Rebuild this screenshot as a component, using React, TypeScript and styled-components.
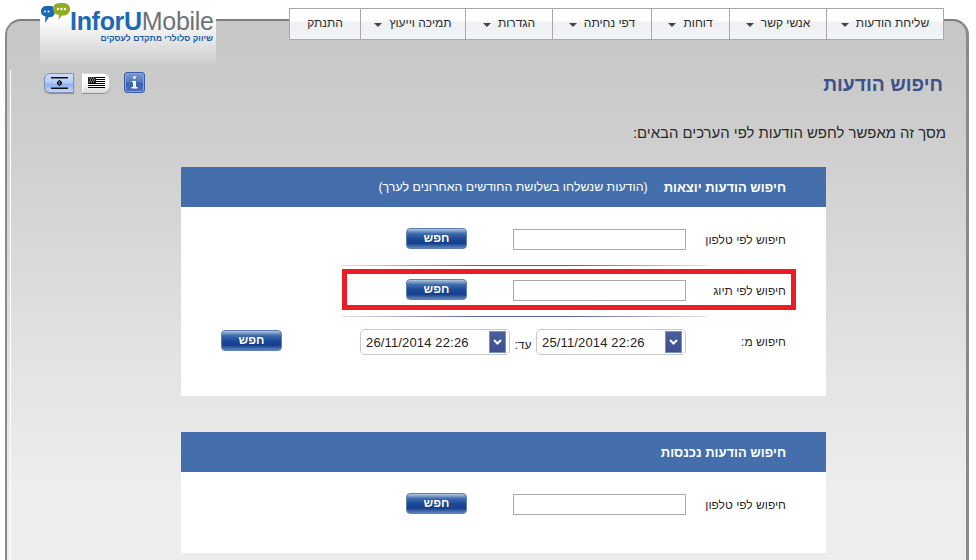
import React from "react";
import styled, { createGlobalStyle } from "styled-components";

const Global = createGlobalStyle`
  html, body { margin: 0; padding: 0; background: #fff; height: 560px; overflow: hidden; }
  body { font-family: "Liberation Sans", Arial, sans-serif; }
  * { box-sizing: border-box; }
`;

const Page = styled.div`
  position: relative;
  width: 976px;
  height: 560px;
  padding: 19px 7px 0 5px;
  overflow: hidden;
`;

const Panel = styled.main`
  height: 600px;
  border-radius: 16px 16px 0 0;
  border-top: 2px solid #7d7d7d;
  border-left: 2px solid #8a8a8a;
  border-right: 3px solid #8a8a8a;
  background: linear-gradient(#c6c6c6 0, #cfcfcf 130px, #e2e2e2 330px, #ededed 470px);
  padding: 49px 23px 0 3px;
`;

const Inner = styled.div`
  border-left: 1px solid #fff;
  height: 100%;
  display: flex;
  flex-direction: column;
  align-items: stretch;
`;

const Logo = styled.div`
  position: absolute;
  left: 40px;
  top: 0;
  width: 176px;
  height: 70px;
  background: linear-gradient(#fff 0, #fff 18px, #c8c8c8 68px);
`;

const LogoIcon = styled.svg`
  position: absolute;
  left: 1px;
  top: 2px;
`;

const LogoText = styled.div`
  position: absolute;
  left: 30px;
  top: 10px;
  font-size: 25px;
  line-height: 23px;
  letter-spacing: -0.3px;
  white-space: nowrap;
  color: #6d7278;
`;

const LogoStrong = styled.span`
  color: #1b69b3;
  font-weight: 700;
`;

const Tagline = styled.div`
  position: absolute;
  right: 3px;
  top: 33px;
  direction: rtl;
  font-size: 8.6px;
  line-height: 10px;
  font-weight: 700;
  color: #1c5ea6;
  white-space: nowrap;
`;

const Menu = styled.nav`
  position: absolute;
  left: 289px;
  top: 8px;
  height: 32px;
  width: 655px;
  display: flex;
  direction: rtl;
  border: 1px solid #a8a8a8;
  background: linear-gradient(#fff 0, #fff 12px, #eff1f4 13px, #f2f3f6 100%);
`;

const MenuItem = styled.div<{ $w: number }>`
  width: ${(p) => p.$w}px;
  flex: none;
  display: flex;
  align-items: center;
  justify-content: center;
  gap: 7px;
  font-size: 12px;
  color: #2d2d2d;
  white-space: nowrap;
  padding-bottom: 2px;
  & + & { border-right: 1px solid #a8a8a8; }
`;

const Caret = styled.span`
  width: 0;
  height: 0;
  margin-top: 3px;
  border-left: 4px solid transparent;
  border-right: 4px solid transparent;
  border-top: 4px solid #444;
`;

const Toolbar = styled.div`
  display: flex;
  justify-content: space-between;
  align-items: flex-start;
  padding: 2px 0 0 33px;
  height: 53px;
`;

const Tools = styled.div`
  display: flex;
  align-items: center;
`;

const FlagButton = styled.div<{ $active?: boolean }>`
  width: ${(p) => (p.$active ? 30 : 28)}px;
  height: 20px;
  margin-right: ${(p) => (p.$active ? 8 : 14)}px;
  display: flex;
  align-items: center;
  justify-content: center;
  border-radius: ${(p) => (p.$active ? "6px 0 0 6px" : "0 7px 7px 0")};
  border: 1px solid ${(p) => (p.$active ? "#7f8fb5" : "#d8d8d8")};
  border-left-color: ${(p) => (p.$active ? "#7f8fb5" : "#fff")};
  box-shadow: 0 1px 1px #8d8d8d;
  background: ${(p) =>
    p.$active
      ? "linear-gradient(#cfdcf8 0, #b9cdf6 45%, #8fb0f2 60%, #c9d8f8 100%)"
      : "linear-gradient(#fff 0, #f6f6f6 60%, #dcdcdc 100%)"};
`;

const InfoButton = styled.div`
  width: 21px;
  height: 21px;
  border-radius: 3px;
  border: 1px solid #3a5ba3;
  box-shadow: inset 0 0 0 1px #8aa4d8;
  background: linear-gradient(#7b9ad4 0, #567abd 45%, #3a5fae 55%, #5074b8 100%);
  display: flex;
  align-items: center;
  justify-content: center;
`;

const Title = styled.h1`
  margin: 0;
  padding-top: 2px;
  direction: rtl;
  font-size: 19.3px;
  line-height: 22px;
  font-weight: 700;
  color: #3e5089;
`;

const Intro = styled.p`
  margin: 0 -3px 0 0;
  direction: rtl;
  font-size: 14.9px;
  line-height: 20px;
  height: 44px;
  color: #2a2a2a;
`;

const Card = styled.section<{ $gap: number }>`
  width: 645px;
  margin-left: 170px;
  margin-bottom: ${(p) => p.$gap}px;
  background: #fff;
  direction: rtl;
`;

const CardHeader = styled.header`
  height: 40px;
  background: #446fac;
  color: #fff;
  display: flex;
  align-items: center;
  padding: 0 40px;
  gap: 16px;
  font-size: 12.4px;
`;

const CardTitle = styled.strong`
  font-size: 13px;
  font-weight: 700;
`;

const CardBody = styled.div<{ $pb: number }>`
  padding: 8px 0 ${(p) => p.$pb}px;
`;

const Row = styled.div`
  position: relative;
  height: 50px;
  display: flex;
  align-items: center;
  padding: 0 40px 1px 0;
  font-size: 12px;
  color: #2a2a2a;
`;

const Label = styled.span`
  width: 100px;
  flex: none;
  white-space: nowrap;
`;

const TextInput = styled.div`
  width: 173px;
  height: 21px;
  flex: none;
  border: 1px solid #a9a9a9;
  background: #fff;
`;

const SearchButton = styled.button<{ $offset: number }>`
  width: 61px;
  height: 21px;
  flex: none;
  margin-right: ${(p) => p.$offset}px;
  margin-top: -2px;
  padding: 0 0 1px;
  border: 1px solid #5e7fb4;
  border-radius: 4px;
  color: #fff;
  font: 700 12px "Liberation Sans", Arial, sans-serif;
  background: linear-gradient(#b4c6df 0, #7a99c6 12%, #3f6cb0 24%, #1f4a98 50%, #143f8c 75%, #5f84bb 100%);
  text-shadow: 0 0 1px #0b2a66;
`;

const Divider = styled.div`
  width: 366px;
  height: 1px;
  margin-right: 119px;
  background: linear-gradient(90deg, #e4e4e8 0, #5560a6 38%, #5560a6 62%, #e4e4e8 100%);
`;

const Highlight = styled.div`
  position: absolute;
  right: 30px;
  top: 3px;
  width: 454px;
  height: 41px;
  border: 5px solid #ed1c24;
  pointer-events: none;
`;

const DateField = styled.div`
  width: 150px;
  height: 26px;
  flex: none;
  margin-top: 1px;
  direction: ltr;
  display: flex;
  align-items: center;
  justify-content: space-between;
  padding: 0 3px 0 5px;
  border: 1px solid #c8c8c8;
  border-radius: 5px;
  font-size: 13px;
  letter-spacing: 0.15px;
  color: #222;
  background: #fff;
`;

const DateArrow = styled.span`
  width: 17px;
  height: 22px;
  display: flex;
  align-items: center;
  justify-content: center;
  border: 1px solid #7d8ebc;
  background: linear-gradient(#4a5d9c, #3c4f90);
`;

const ToLabel = styled.span`
  width: 26px;
  flex: none;
  text-align: center;
  padding-top: 6px;
`;

const Chevron = () => (
  <svg width="9" height="6" viewBox="0 0 9 6">
    <path d="M1 1l3.500 3.500L8 1" fill="none" stroke="#fff" strokeWidth="2" />
  </svg>
);

const MENU: [string, number, boolean][] = [
  ["שליחת הודעות", 116, true],
  ["אנשי קשר", 97, true],
  ["דוחות", 78, true],
  ["דפי נחיתה", 99, true],
  ["הגדרות", 87, true],
  ["תמיכה וייעוץ", 105, true],
  ["התנתק", 71, false],
];

const DatePicker = ({ value }: { value: string }) => (
  <DateField>
    {value}
    <DateArrow>
      <Chevron />
    </DateArrow>
  </DateField>
);

export default function App() {
  return (
    <Page>
      <Global />
      <Panel>
        <Inner>
          <Toolbar>
            <Tools>
              <FlagButton $active>
                <svg width="17" height="12" viewBox="0 0 17 12">
                  <rect y="0" width="17" height="1.500" fill="#111" />
                  <rect y="10.500" width="17" height="1.500" fill="#111" />
                  <path d="M8.500 3l2.300 4H6.200zM8.500 9L6.200 5h4.600z" fill="none" stroke="#111" strokeWidth="1" />
                </svg>
              </FlagButton>
              <FlagButton>
                <svg width="17" height="11" viewBox="0 0 17 11">
                  <rect width="17" height="11" fill="#fff" />
                  <path d="M0 .5h17M0 2.500h17M0 4.500h17M0 6.500h17M0 8.500h17M0 10.500h17" stroke="#000" />
                  <rect width="8" height="6" fill="#222" />
                  <path d="M1 1h1M3 1h1M5 1h1M2 3h1M4 3h1M6 3h1M1 5h1M3 5h1M5 5h1" stroke="#ddd" strokeWidth=".8" />
                </svg>
              </FlagButton>
              <InfoButton>
                <svg width="7" height="13" viewBox="0 0 7 13">
                  <circle cx="3.500" cy="1.500" r="1.400" fill="#fff" />
                  <path d="M1 5h4v6h1.500v1.500H.5V11H2V6.300H1z" fill="#fff" />
                </svg>
              </InfoButton>
            </Tools>
            <Title>חיפוש הודעות</Title>
          </Toolbar>
          <Intro>מסך זה מאפשר לחפש הודעות לפי הערכים הבאים:</Intro>
          <Card $gap={36}>
            <CardHeader>
              <CardTitle>חיפוש הודעות יוצאות</CardTitle>
              <span>(הודעות שנשלחו בשלושת החודשים האחרונים לערך)</span>
            </CardHeader>
            <CardBody $pb={29}>
              <Row>
                <Label>חיפוש לפי טלפון</Label>
                <TextInput />
                <SearchButton $offset={46}>חפש</SearchButton>
              </Row>
              <Divider />
              <Row>
                <Label>חיפוש לפי תיוג</Label>
                <TextInput />
                <SearchButton $offset={46}>חפש</SearchButton>
                <Highlight />
              </Row>
              <Divider />
              <Row>
                <Label>חיפוש מ:</Label>
                <DatePicker value="25/11/2014 22:26" />
                <ToLabel>עד:</ToLabel>
                <DatePicker value="26/11/2014 22:26" />
                <SearchButton $offset={78}>חפש</SearchButton>
              </Row>
            </CardBody>
          </Card>
          <Card $gap={0}>
            <CardHeader>
              <CardTitle>חיפוש הודעות נכנסות</CardTitle>
            </CardHeader>
            <CardBody $pb={23}>
              <Row>
                <Label>חיפוש לפי טלפון</Label>
                <TextInput />
                <SearchButton $offset={46}>חפש</SearchButton>
              </Row>
            </CardBody>
          </Card>
        </Inner>
      </Panel>
      <Logo>
        <LogoIcon width="32" height="24" viewBox="0 0 32 24">
          <path d="M0 9c0-3 2-5 6-5h3c3 0 5 2 5 5.500S12 15 9 15H8l-4 6 .5-6.500C1.500 14 0 12 0 9z" fill="#1b69b3" />
          <path d="M12 7c0-4 3-6 7-6h3c4 0 7 2 7 6s-3 6.500-7 6.500h-1L17.500 18l.5-5C14 12.500 12 10.500 12 7z" fill="#8fae1f" />
          <circle cx="17" cy="7" r="1.200" fill="#fff" />
          <circle cx="20.500" cy="7" r="1.200" fill="#fff" />
          <circle cx="24" cy="7" r="1.200" fill="#fff" />
          <circle cx="4" cy="9.500" r="1" fill="#fff" />
          <circle cx="7.500" cy="9.500" r="1" fill="#fff" />
        </LogoIcon>
        <LogoText>
          <LogoStrong>InforU</LogoStrong>Mobile
        </LogoText>
        <Tagline>שיווק סלולרי מתקדם לעסקים</Tagline>
      </Logo>
      <Menu>
        {MENU.map(([label, w, caret]) => (
          <MenuItem key={label} $w={w}>
            {label}
            {caret && <Caret />}
          </MenuItem>
        ))}
      </Menu>
    </Page>
  );
}
